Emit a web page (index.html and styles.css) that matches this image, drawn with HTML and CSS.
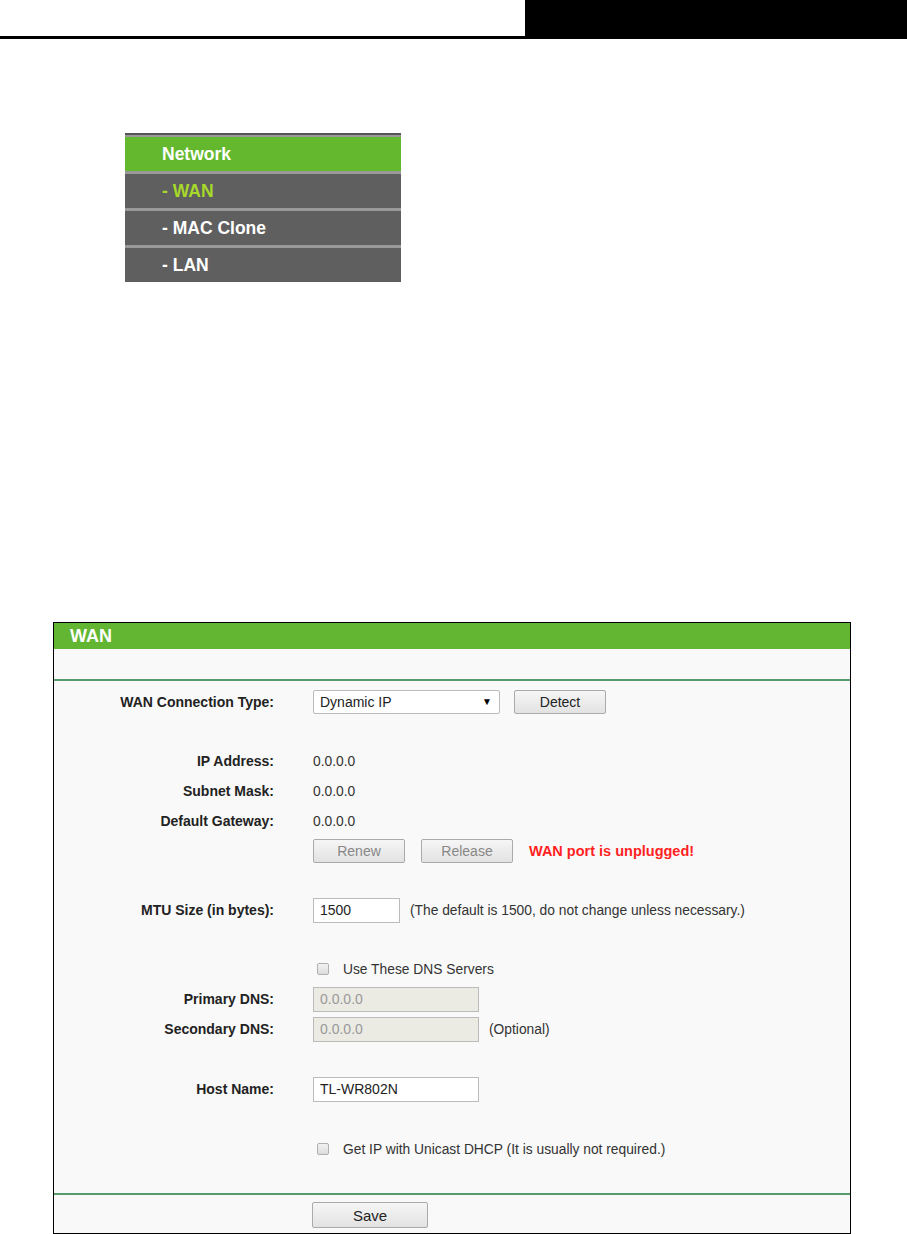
FILE: index.html
```html
<!DOCTYPE html>
<html lang="en">
<head>
    <meta charset="UTF-8">
    <meta name="viewport" content="width=device-width, initial-scale=1.0">
    <title>WAN</title>
    <link rel="stylesheet" href="styles.css">
</head>
<body>
    <div class="page-head">
        <div class="head-blank"></div>
        <div class="head-block"></div>
    </div>

    <div class="menu">
        <div class="menu-item menu-title">Network</div>
        <div class="menu-item active">- WAN</div>
        <div class="menu-item">- MAC Clone</div>
        <div class="menu-item">- LAN</div>
    </div>

    <div class="panel">
        <div class="panel-title">WAN</div>
        <div class="panel-sub"></div>
        <form class="panel-body">
            <div class="row">
                <label class="label">WAN Connection Type:</label>
                <div class="field">
                    <span class="select-wrap">
                        <select class="select">
                            <option>Dynamic IP</option>
                            <option>Static IP</option>
                            <option>PPPoE</option>
                        </select>
                    </span>
                    <button type="button" class="btn btn-detect">Detect</button>
                </div>
            </div>
            <div class="spacer"></div>
            <div class="row">
                <label class="label">IP Address:</label>
                <div class="field">0.0.0.0</div>
            </div>
            <div class="row">
                <label class="label">Subnet Mask:</label>
                <div class="field">0.0.0.0</div>
            </div>
            <div class="row">
                <label class="label">Default Gateway:</label>
                <div class="field">0.0.0.0</div>
            </div>
            <div class="row">
                <label class="label"></label>
                <div class="field">
                    <button type="button" class="btn btn-small" disabled>Renew</button>
                    <button type="button" class="btn btn-small" disabled>Release</button>
                    <span class="warn">WAN port is unplugged!</span>
                </div>
            </div>
            <div class="spacer"></div>
            <div class="row">
                <label class="label">MTU Size (in bytes):</label>
                <div class="field">
                    <input type="text" class="input input-mtu" value="1500">
                    <span class="note">(The default is 1500, do not change unless necessary.)</span>
                </div>
            </div>
            <div class="spacer"></div>
            <div class="row">
                <label class="label"></label>
                <div class="field">
                    <input type="checkbox" class="check" id="dns">
                    <span class="check-text">Use These DNS Servers</span>
                </div>
            </div>
            <div class="row">
                <label class="label">Primary DNS:</label>
                <div class="field">
                    <input type="text" class="input input-wide" value="0.0.0.0" disabled>
                </div>
            </div>
            <div class="row">
                <label class="label">Secondary DNS:</label>
                <div class="field">
                    <input type="text" class="input input-wide" value="0.0.0.0" disabled>
                    <span class="note">(Optional)</span>
                </div>
            </div>
            <div class="spacer spacer-tall"></div>
            <div class="row">
                <label class="label">Host Name:</label>
                <div class="field">
                    <input type="text" class="input input-wide" value="TL-WR802N">
                </div>
            </div>
            <div class="spacer spacer-tall"></div>
            <div class="row">
                <label class="label"></label>
                <div class="field">
                    <input type="checkbox" class="check" id="unicast">
                    <span class="check-text">Get IP with Unicast DHCP (It is usually not required.)</span>
                </div>
            </div>
        </form>
        <div class="panel-foot">
            <button type="button" class="btn btn-save">Save</button>
        </div>
    </div>
</body>
</html>
```

FILE: styles.css
```css
body {
    margin: 0;
    padding: 0;
    background-color: #fff;
    font-family: "Liberation Sans", Arial, sans-serif;
    color: #333;
}
.page-head {
    display: flex;
    height: 36px;
    border-bottom: 3px solid #000;
}
.head-blank {
    flex: 0 0 525px;
}
.head-block {
    flex: 1;
    background-color: #000;
}

/* left menu picture */
.menu {
    width: 276px;
    margin: 94px 0 0 125px;
    background-color: #999;
    border-top: 2px solid #555;
}
.menu-item {
    height: 34px;
    line-height: 34px;
    padding-left: 37px;
    margin-top: 3px;
    background-color: #5f5f5f;
    color: #fff;
    font-size: 17.5px;
    font-weight: bold;
}
.menu-item:first-child {
    margin-top: 2px;
}
.menu-title {
    background-color: #63b82e;
}
.menu-item.active {
    color: #a7d92a;
}

/* WAN panel */
.panel {
    width: 796px;
    margin: 340px 0 0 53px;
    border: 1px solid #000;
    background-color: #f9f9f9;
}
.panel-title {
    height: 26px;
    line-height: 26px;
    padding-left: 16px;
    background-color: #63b632;
    color: #fff;
    font-size: 18px;
    font-weight: bold;
}
.panel-sub {
    height: 30px;
    border-bottom: 2px solid #579c6c;
}
.panel-body {
    padding: 6px 0 29px;
    border-bottom: 2px solid #579c6c;
}
.row {
    display: flex;
    align-items: center;
    height: 30px;
    font-size: 13.8px;
}
.spacer {
    height: 29px;
}
.spacer-tall {
    height: 30px;
}
.label {
    width: 220px;
    padding-right: 39px;
    text-align: right;
    font-weight: bold;
    font-size: 14px;
    color: #222;
}
.field {
    display: flex;
    align-items: center;
}
.select-wrap {
    position: relative;
    display: inline-block;
}
.select-wrap::after {
    content: "\25BC";
    position: absolute;
    right: 8px;
    top: 6px;
    font-size: 10px;
    color: #000;
    pointer-events: none;
}
.select {
    -webkit-appearance: none;
    appearance: none;
    width: 187px;
    height: 24px;
    padding: 0 6px;
    border: 1px solid #bbb;
    border-radius: 2px;
    background-color: #fff;
    font-family: inherit;
    font-size: 14px;
    color: #222;
}
.btn {
    height: 24px;
    padding: 0;
    border: 1px solid #aaa;
    border-radius: 2px;
    background: linear-gradient(#f6f6f6, #e2e2e2);
    font-family: inherit;
    font-size: 14px;
    color: #222;
    cursor: pointer;
}
.btn:disabled {
    color: #888;
    cursor: default;
}
.btn-detect {
    width: 92px;
    margin-left: 14px;
}
.btn-small {
    width: 92px;
    margin-right: 16px;
}
.warn {
    color: #ff1f1f;
    font-weight: bold;
    font-size: 14.5px;
}
.input {
    height: 25px;
    box-sizing: border-box;
    padding: 0 6px;
    border: 1px solid #bbb;
    background-color: #fff;
    font-family: inherit;
    font-size: 14px;
    color: #222;
}
.input:disabled {
    background-color: #ebebe4;
    color: #999;
}
.input-mtu {
    width: 87px;
}
.input-wide {
    width: 166px;
}
.note {
    margin-left: 10px;
    color: #333;
}
.check {
    -webkit-appearance: none;
    appearance: none;
    width: 12px;
    height: 12px;
    margin: 0 14px 0 4px;
    border: 1px solid #b0b0b0;
    border-radius: 2px;
    background: linear-gradient(#f2f2f2, #dcdcdc);
}
.check-text {
    color: #333;
}
.panel-foot {
    height: 38px;
    display: flex;
    align-items: center;
    padding-left: 258px;
}
.btn-save {
    width: 116px;
    height: 26px;
    margin-top: 2px;
    font-size: 15px;
}
```
